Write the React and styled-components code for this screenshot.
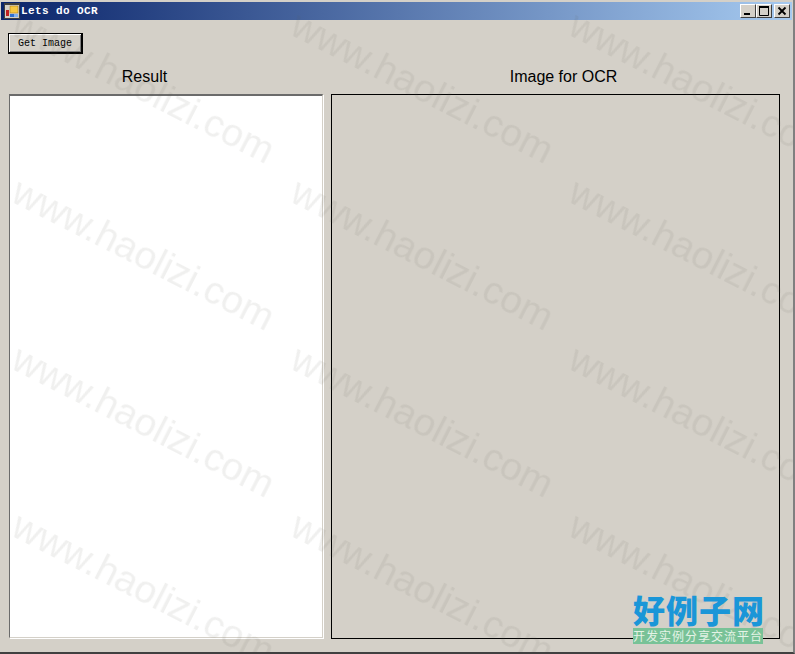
import styled, { createGlobalStyle } from 'styled-components';

const GlobalStyle = createGlobalStyle`
  html, body {
    margin: 0;
    padding: 0;
    background: #d4d0c8;
  }
`;

const Window = styled.div`
  position: relative;
  box-sizing: border-box;
  width: 795px;
  height: 654px;
  overflow: hidden;
  display: flex;
  flex-direction: column;
  background: #d4d0c8;
  padding: 2px 1px 0 1px;
  border-right: 2px solid #808080;
  border-bottom: 2px solid #404040;
  font-family: "Liberation Sans", Arial, sans-serif;
`;

const TitleBar = styled.div`
  height: 18px;
  flex: none;
  display: flex;
  align-items: center;
  padding: 0 2px 0 3px;
  background: linear-gradient(90deg, #0a246a 0%, #a6caf0 100%);
`;

const AppIcon = styled.svg`
  width: 16px;
  height: 16px;
  flex: none;
`;

const Title = styled.span`
  margin-left: 1px;
  color: #fff;
  font: bold 11px "Liberation Mono", monospace;
  letter-spacing: 0.4px;
`;

const Controls = styled.div`
  margin-left: auto;
  display: flex;
`;

const CtrlButton = styled.div`
  box-sizing: border-box;
  width: 16px;
  height: 14px;
  margin-left: ${({ $gap }) => ($gap ? '2px' : '0')};
  background: #d4d0c8;
  border: 1px solid;
  border-color: #fff #404040 #404040 #fff;
  display: flex;
  align-items: center;
  justify-content: center;
`;

const CtrlGlyph = styled.svg`
  width: 10px;
  height: 10px;
`;

const Body = styled.div`
  flex: 1;
  display: flex;
  flex-direction: column;
  padding: 13px 12px 13px 7px;
`;

const Toolbar = styled.div`
  height: 21px;
  flex: none;
`;

const GetImage = styled.button`
  display: block;
  box-sizing: border-box;
  width: 75px;
  height: 21px;
  padding: 0;
  background: #d4d0c8;
  border: 2px solid #000;
  border-width: 1px 2px 2px 1px;
  box-shadow: inset 1px 1px 0 #fff, inset -1px -1px 0 #808080;
  font: 10px "Liberation Mono", monospace;
  color: #000;
`;

const Columns = styled.div`
  flex: 1;
  display: flex;
  gap: 7px;
  margin-top: 11px;
`;

const Column = styled.div`
  width: ${({ $w }) => $w}px;
  display: flex;
  flex-direction: column;
`;

const Heading = styled.div`
  height: 29px;
  flex: none;
  padding-top: 1px;
  padding-left: ${({ $left }) => $left || 0}px;
  padding-right: ${({ $right }) => $right || 0}px;
  text-align: center;
  font-size: 16px;
  line-height: 22px;
  color: #000;
  box-sizing: border-box;
`;

const ResultBox = styled.div`
  flex: 1;
  box-sizing: border-box;
  margin: 0 1px 1px 1px;
  background: #fff;
  border-style: solid;
  border-width: 2px 1px 1px 1px;
  border-color: #6b6b6b #d4d0c8 #d4d0c8 #6b6b6b;
  box-shadow: 1px 1px 0 #fff;
`;

const ImageBox = styled.div`
  flex: 1;
  box-sizing: border-box;
  border: 1px solid #000;
`;

const Watermarks = styled.div`
  position: absolute;
  inset: 0;
  pointer-events: none;
`;

const Mark = styled.span`
  position: absolute;
  left: ${({ $x }) => $x}px;
  top: ${({ $y }) => $y}px;
  transform-origin: 0 50%;
  transform: rotate(27deg);
  font-size: 39px;
  line-height: 46px;
  white-space: nowrap;
  color: rgba(90, 85, 80, 0.09);
  filter: blur(0.4px);
`;

const Logo = styled.div`
  position: absolute;
  left: 633px;
  top: 591px;
  width: 130px;
  display: flex;
  flex-direction: column;
  align-items: stretch;
`;

const LogoName = styled.div`
  height: 37px;
  font: 900 32px/36px "Noto Sans CJK SC", sans-serif;
  letter-spacing: 1px;
  color: #1a96d8;
  white-space: nowrap;
  text-align: center;
`;

const LogoTag = styled.div`
  height: 16px;
  background: #78c297;
  color: #e4f3e6;
  font: 12px/16px "Noto Sans CJK SC", sans-serif;
  letter-spacing: 1px;
  text-align: center;
  white-space: nowrap;
`;

const markRows = [-1, 166, 333, 500];
const markCols = [15, 294, 572];

export default function App() {
  return (
    <>
      <GlobalStyle />
      <Window>
        <TitleBar>
          <AppIcon viewBox="0 0 16 16">
            <rect x="0.5" y="0.5" width="15" height="15" fill="#d4d0c8" stroke="#404040" />
            <rect x="0" y="0" width="16" height="2" fill="#404040" />
            <rect x="2" y="7" width="3" height="6" fill="#c02020" />
            <rect x="6" y="3" width="8" height="7" fill="#f8c840" stroke="#a07010" strokeWidth="0.5" />
            <rect x="6" y="11" width="4" height="3" fill="#3070d0" />
            <rect x="10" y="11" width="4" height="3" fill="#80b0f0" />
          </AppIcon>
          <Title>Lets do OCR</Title>
          <Controls>
            <CtrlButton>
              <CtrlGlyph viewBox="0 0 10 10">
                <rect x="1" y="7" width="6" height="2" fill="#000" />
              </CtrlGlyph>
            </CtrlButton>
            <CtrlButton>
              <CtrlGlyph viewBox="0 0 10 10">
                <path d="M0.5 0.5H9.5V9.5H0.5Z" fill="none" stroke="#000" />
                <rect x="0" y="0" width="10" height="2" fill="#000" />
              </CtrlGlyph>
            </CtrlButton>
            <CtrlButton $gap>
              <CtrlGlyph viewBox="0 0 10 10">
                <path d="M1.5 1.5L8.5 8.5M8.5 1.5L1.5 8.5" stroke="#000" strokeWidth="1.8" />
              </CtrlGlyph>
            </CtrlButton>
          </Controls>
        </TitleBar>
        <Body>
          <Toolbar>
            <GetImage>Get Image</GetImage>
          </Toolbar>
          <Columns>
            <Column $w={316}>
              <Heading $right={43}>Result</Heading>
              <ResultBox />
            </Column>
            <Column $w={449}>
              <Heading $left={16}>Image for OCR</Heading>
              <ImageBox />
            </Column>
          </Columns>
        </Body>
        <Watermarks>
          {markCols.map((x) =>
            markRows.map((y) => (
              <Mark key={`${x}-${y}`} $x={x} $y={y}>
                www.haolizi.com
              </Mark>
            )),
          )}
        </Watermarks>
        <Logo>
          <LogoName>好例子网</LogoName>
          <LogoTag>开发实例分享交流平台</LogoTag>
        </Logo>
      </Window>
    </>
  );
}
